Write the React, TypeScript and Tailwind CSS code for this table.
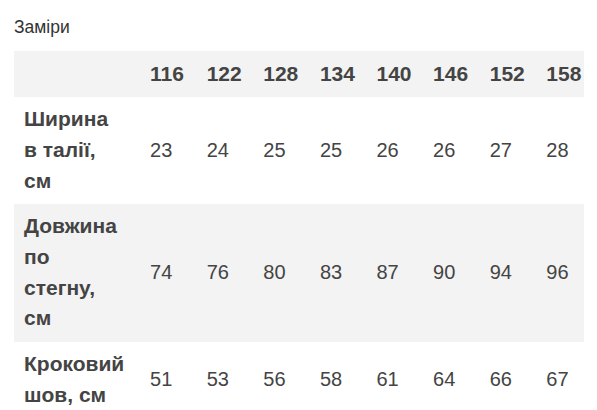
const sizes = ['116', '122', '128', '134', '140', '146', '152', '158'];

const rows = [
  { label: ['Ширина', 'в талії,', 'см'], values: ['23', '24', '25', '25', '26', '26', '27', '28'] },
  { label: ['Довжина', 'по', 'стегну,', 'см'], values: ['74', '76', '80', '83', '87', '90', '94', '96'] },
  { label: ['Кроковий', 'шов, см'], values: ['51', '53', '56', '58', '61', '64', '66', '67'] },
];

export default function App() {
  return (
    <div
      className="w-[597px] h-[410px] bg-white overflow-hidden px-[14px] pt-[17px]"
      style={{ fontFamily: '"Liberation Sans", Arial, sans-serif' }}
    >
      <div className="text-[17.5px] leading-[20px] text-[#333]">Заміри</div>

      <div className="mt-[14px] w-[570px] overflow-hidden">
        <table className="table-fixed border-collapse w-[579px] text-[20px] leading-[30.7px] text-[#444]">
          <colgroup>
            <col className="w-[126px]" />
            {sizes.map((s) => (
              <col key={s} className="w-[56.6px]" />
            ))}
          </colgroup>
          <thead>
            <tr className="bg-[#f3f3f3]">
              <th className="py-[7.5px] pl-[10px]"></th>
              {sizes.map((s) => (
                <th key={s} className="py-[7.5px] pl-[10px] text-left font-bold text-[21px]">
                  {s}
                </th>
              ))}
            </tr>
          </thead>
          <tbody>
            {rows.map((row, i) => (
              <tr key={i} className={i % 2 === 1 ? 'bg-[#f3f3f3]' : 'bg-white'}>
                <td className="py-[7.5px] pl-[10px] font-bold text-[21px] align-middle">
                  {row.label.map((l, j) => (
                    <div key={j} className="whitespace-nowrap">
                      {l}
                    </div>
                  ))}
                </td>
                {row.values.map((v, j) => (
                  <td key={j} className="py-[7.5px] pl-[10px] align-middle">
                    {v}
                  </td>
                ))}
              </tr>
            ))}
          </tbody>
        </table>
      </div>
    </div>
  );
}
